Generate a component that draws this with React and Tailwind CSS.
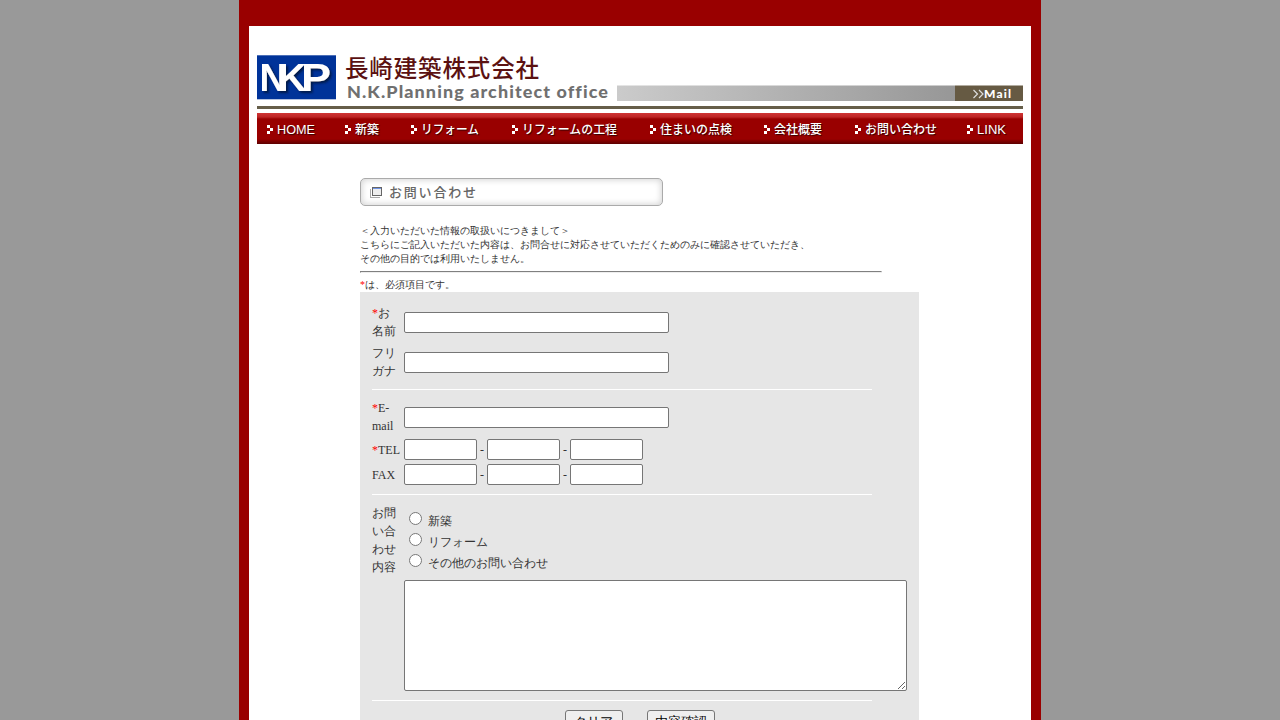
const NAV = [
  ["HOME", "w-[78px]", 38], ["新築", "w-[66px]", 24], ["リフォーム", "w-[101px]", 58], ["リフォームの工程", "w-[138px]", 95],
  ["住まいの点検", "w-[114px]", 72], ["会社概要", "w-[91px]", 48], ["お問い合わせ", "w-[112px]", 72], ["LINK", "w-[56px]", 29],
];

function Nav() {
  return (
    <nav className="flex h-[31px] items-center bg-[linear-gradient(#cf3535_0px,#bd2424_4px,#990000_6px,#990000_26px,#5c0000_31px)] pl-[10px]">
      {NAV.map(([label, width, len]) => (
        <a key={label} className={`flex items-center ${width}`}>
          <svg width="6" height="9" className="mr-[3px] mt-px shrink-0" fill="#fff" shapeRendering="crispEdges">
            <path d="M0 0h3v3H0zM3 3h3v3H3zM0 6h3v3H0z" />
          </svg>
          <svg width={len + 3} height="20" className="shrink-0 overflow-visible">
            <text x="1" y="15" textLength={len} lengthAdjust="spacingAndGlyphs" className="fill-white font-['Liberation_Sans','Noto_Sans_CJK_JP',sans-serif] text-[12.5px] font-medium [text-shadow:1px_1px_1px_#300]">{label}</text>
          </svg>
        </a>
      ))}
    </nav>
  );
}

function Header() {
  return (
    <header className="mt-[27px] h-[60px]">
      <svg width="766" height="60" viewBox="257 53 766 60" className="block overflow-visible">
        <defs>
          <linearGradient id="bar"><stop stopColor="#cbcbcb" /><stop offset="1" stopColor="#979797" /></linearGradient>
          <filter id="sh" x="-20%" y="-20%" width="150%" height="150%"><feDropShadow dx="2" dy="2" stdDeviation="1.3" floodColor="#001540" floodOpacity="0.9" /></filter>
        </defs>
        <rect x="257" y="55.3" width="79" height="44" fill="#003399" />
        <g filter="url(#sh)" fill="#fff" className="font-['Liberation_Sans',sans-serif] text-[39px] font-bold">
          <text x="259.5" y="91" textLength="27" lengthAdjust="spacingAndGlyphs">N</text>
          <text x="277.5" y="91" textLength="29" lengthAdjust="spacingAndGlyphs">K</text>
          <text x="301" y="91" textLength="30" lengthAdjust="spacingAndGlyphs">P</text>
        </g>
        <text x="345" y="76.500" textLength="194" fill="#5b1111" className="font-['Noto_Sans_CJK_JP',sans-serif] text-[23.5px] font-medium">長崎建築株式会社</text>
        <text x="347" y="98" textLength="262" lengthAdjust="spacingAndGlyphs" fill="#707070" className="font-['Lato',sans-serif] text-[16.5px] font-black tracking-[1px]">N.K.Planning architect office</text>
        <rect x="617" y="85.500" width="338" height="15.500" fill="url(#bar)" />
        <rect x="955" y="85.500" width="68" height="15.500" fill="#665a43" />
        <path d="M973.500 90l4 4-4 4M979 90l4 4-4 4" fill="none" stroke="#ddd" strokeWidth="1.2" />
        <text x="984" y="98" textLength="27" fill="#fff" className="font-['Lato',sans-serif] text-[12px] font-black">Mail</text>
        <rect x="257" y="106" width="766" height="3" fill="#665e49" />
      </svg>
    </header>
  );
}

const Star = () => <span className="text-[#ff0000]">*</span>;
const Field = ({ className }) => <input className={`block h-[21px] rounded-[2px] border border-[#767676] bg-white ${className}`} />;
const Rule = ({ className }) => <div className={`h-px w-[500px] bg-white ${className}`} />;

function Row({ label, className, children }) {
  return (
    <div className={`flex items-center ${className}`}>
      <div className="w-8 shrink-0 whitespace-nowrap leading-[18px]">{label}</div>
      {children}
    </div>
  );
}

const Phone = () => (
  <div className="flex items-center">
    <Field className="w-[73px]" /><span className="w-[10px] text-center">-</span>
    <Field className="w-[73px]" /><span className="w-[10px] text-center">-</span>
    <Field className="w-[73px]" />
  </div>
);

const Button = ({ className, children }) => (
  <button className={`h-[22px] rounded-[3px] border border-[#767676] bg-[#efefef] font-['Liberation_Sans'] text-[13.333px] leading-[22px] text-black ${className}`}>{children}</button>
);

export default function App() {
  return (
    <div className="flex h-[720px] justify-center overflow-hidden bg-[#999999] font-['Liberation_Serif'] text-[12px] text-[#333333]">
      <div className="w-[802px] bg-[#990000] px-[10px] pt-[26px]">
        <div className="flow-root h-[900px] bg-white px-2">
          <Header />
          <Nav />
          <main className="ml-[103px] mt-[34px] w-[559px]">
            <h1 className="flex h-7 w-[303px] items-center rounded-[5px] border border-[#aaaaaa] pl-[9px] shadow-[inset_0_0_6px_1px_#d4d4d4]">
              <svg width="13" height="12" className="mr-[6px] shrink-0" fill="none" shapeRendering="crispEdges">
                <path d="M.5 3v8.500H10" stroke="#aaa" /><rect x="2.500" y="1.500" width="9" height="8" fill="#eee" stroke="#666" /><path d="M3 2.500h8" stroke="#6f94e6" />
              </svg>
              <svg width="92" height="22"><text x="0" y="16" textLength="87" className="fill-[#666666] font-['Noto_Sans_CJK_JP',sans-serif] text-[13px] font-medium">お問い合わせ</text></svg>
            </h1>
            <p className="mt-[18px] whitespace-nowrap text-[10px] leading-[14px]">
              ＜入力いただいた情報の取扱いにつきまして＞<br />
              こちらにご記入いただいた内容は、お問合せに対応させていただくためのみに確認させていただき、<br />
              その他の目的では利用いたしません。
            </p>
            <div className="mt-[5px] h-[2px] w-[522px] border border-b-[#eeeeee] border-r-[#eeeeee] border-l-[#808080] border-t-[#808080]" />
            <p className="mt-[5px] text-[10px] leading-[14px]"><Star />は、必須項目です。</p>
            <form className="h-[460px] bg-[#e6e6e6] px-3 pt-3">
              <Row className="h-9" label={<><Star />お<br />名前</>}><Field className="w-[265px]" /></Row>
              <Row className="mt-1 h-9" label={<>フリ<br />ガナ</>}><Field className="w-[265px]" /></Row>
              <Rule className="mt-[9px]" />
              <Row className="mt-[9px] h-9" label={<><Star />E-<br />mail</>}><Field className="w-[265px]" /></Row>
              <Row className="mt-1 h-[21px]" label={<><Star />TEL</>}><Phone /></Row>
              <Row className="mt-1 h-[21px]" label="FAX"><Phone /></Row>
              <Rule className="mt-[9px]" />
              <Row className="mt-[9px] h-[72px]" label={<>お問<br />い合<br />わせ<br />内容</>}>
                <div className="pt-[5px]">
                  {["新築", "リフォーム", "その他のお問い合わせ"].map((t) => (
                    <label key={t} className="flex h-[21px] items-center leading-[21px]">
                      <input type="radio" name="kind" className="mb-[7px] ml-[5px] mr-[6px] h-[13px] w-[13px]" />{t}
                    </label>
                  ))}
                </div>
              </Row>
              <textarea className="ml-8 mt-1 block h-[111px] w-[503px] rounded-[2px] border border-[#767676] bg-white" />
              <Rule className="mt-[9px]" />
              <div className="mt-[9px] flex justify-center gap-6">
                <Button className="w-[58px]">クリア</Button>
                <Button className="w-[68px]">内容確認</Button>
              </div>
            </form>
          </main>
        </div>
      </div>
    </div>
  );
}
